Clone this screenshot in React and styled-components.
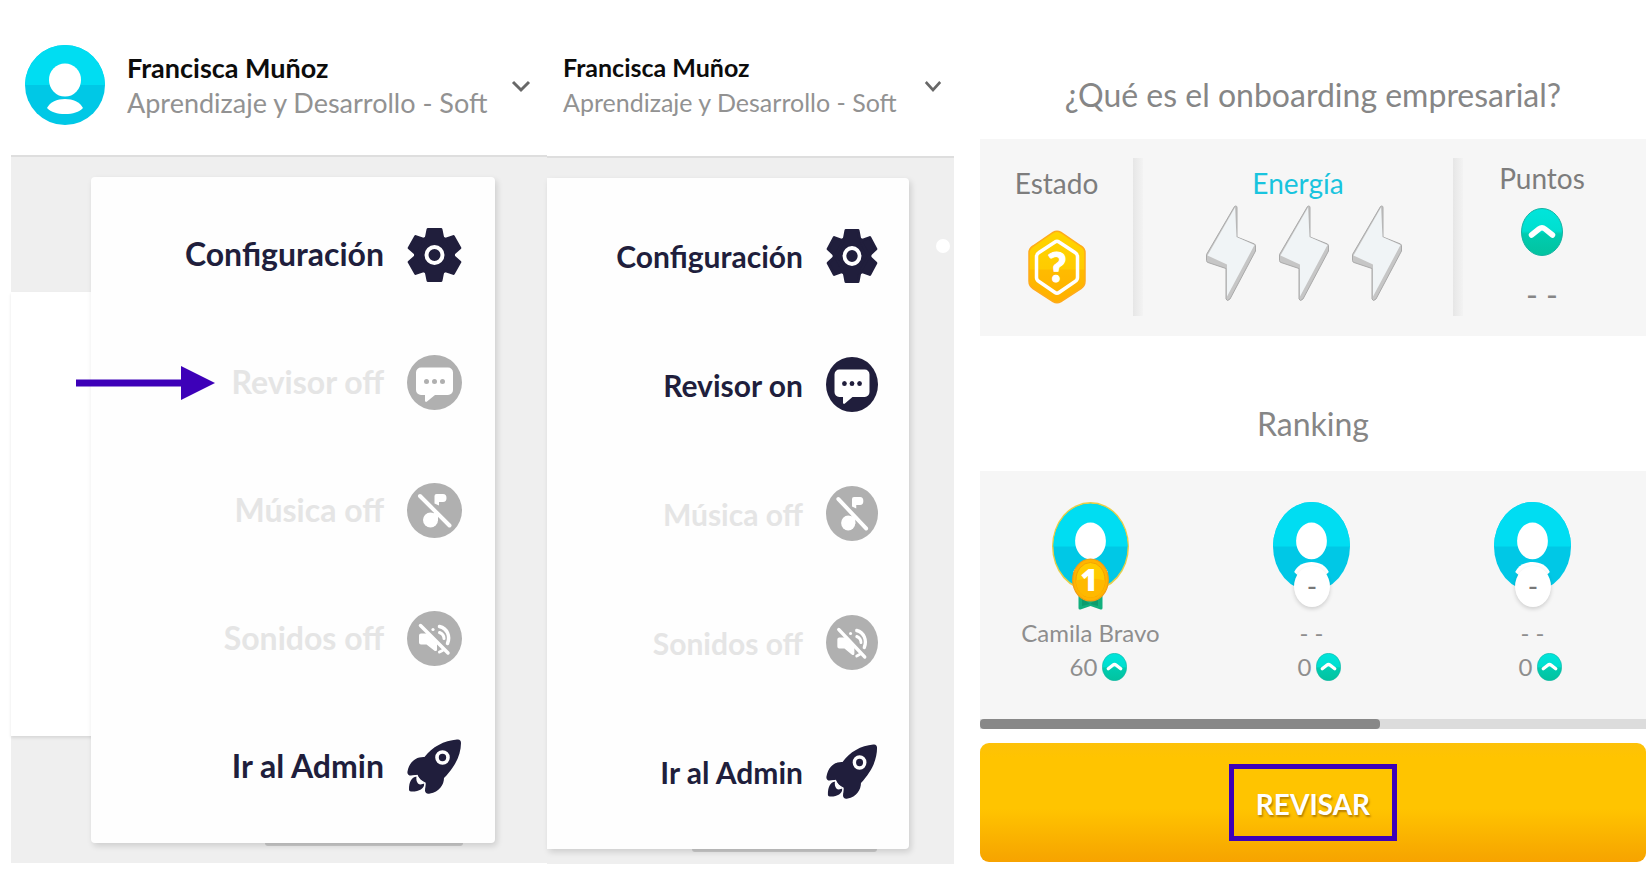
import React, { useId } from "react";
import styled, { createGlobalStyle } from "styled-components";

const GlobalStyle = createGlobalStyle`
   * {
      box-sizing: border-box;
   }
   body {
      margin: 0;
      background-color: white;
      font-family: Lato, "Liberation Sans", sans-serif;
   }
   button {
      font-family: inherit;
      border: none;
      padding: 0;
      background: none;
      cursor: pointer;
   }
   svg {
      display: block;
      flex-shrink: 0;
   }
`;

const Page = styled.main`
   display: grid;
   grid-template-columns: minmax(0, 536fr) minmax(0, 407fr) minmax(0, 692fr);
   align-items: start;
   padding: 0 4px 0 11px;
`;

/* profile panels */
const Panel = styled.section`
   display: flex;
   flex-direction: column;
`;
const Header = styled.header`
   display: flex;
   align-items: center;
   gap: 22px;
   height: ${(props) => (props.$compact ? "158px" : "157px")};
   padding: ${(props) => (props.$compact ? "45px 12px 31px 16px" : "45px 16px 30px 14px")};
   border-bottom: 2px solid #dedede;
`;
const UserInfo = styled.div`
   flex: 1;
   min-width: 0;
   line-height: 35px;
   white-space: nowrap;
`;
const UserName = styled.div`
   font-size: ${(props) => (props.$compact ? "25px" : "27px")};
   font-weight: bold;
   color: #0c0c0c;
`;
const UserArea = styled.div`
   font-size: ${(props) => (props.$compact ? "25px" : "27px")};
   color: #929292;
`;
const Toggle = styled.button`
   display: flex;
   align-items: center;
   padding-top: 3px;
`;
const Body = styled.div`
   position: relative;
   padding: ${(props) => (props.$compact ? "20px 45px 15px 0" : "20px 52px 20px 80px")};
   background-color: #efefef;
`;
const Sheet = styled.div`
   position: absolute;
   top: 135px;
   bottom: 127px;
   left: 0;
   width: 120px;
   background-color: white;
   box-shadow: 0 2px 3px rgba(0, 0, 0, 0.1);
`;
const Shade = styled.div`
   position: absolute;
   right: 32px;
   bottom: -3px;
   width: ${(props) => (props.$compact ? "51%" : "49%")};
   height: 6px;
   border-radius: 3px;
   background-color: #cbcbcb;
`;
const Dot = styled.div`
   position: absolute;
   top: 81px;
   right: 4px;
   width: 14px;
   height: 14px;
   border-radius: 50%;
   background-color: white;
`;
const MenuWrap = styled.div`
   position: relative;
`;
const Menu = styled.nav`
   position: relative;
   display: flex;
   flex-direction: column;
   padding: ${(props) => (props.$compact ? "13px 31px 13px 0" : "13px 33px 13px 0")};
   border-radius: ${(props) => (props.$compact ? "0 4px 4px 0" : "4px")};
   background-color: #fefefe;
   box-shadow: 2px 3px 6px rgba(0, 0, 0, 0.14);
`;
const MenuItem = styled.button`
   display: flex;
   align-items: center;
   justify-content: flex-end;
   gap: 23px;
   height: ${(props) => (props.$compact ? "129px" : "128px")};
   font-size: ${(props) => (props.$compact ? "30px" : "32px")};
   font-weight: bold;
   line-height: 36px;
   white-space: nowrap;
   color: ${(props) => (props.$off ? "#e5e5e5" : "#201e3c")};
`;
const Arrow = styled.svg`
   position: absolute;
   top: 209px;
   left: 65px;
`;

/* summary panel */
const Summary = styled.section`
   display: flex;
   flex-direction: column;
   padding-left: 26px;
   color: #868686;
`;
const Title = styled.h2`
   margin: 0;
   padding: ${(props) => (props.$first ? "75px 0 24px" : "68px 0 27px")};
   font-size: 32px;
   font-weight: normal;
   line-height: 40px;
   text-align: center;
   white-space: nowrap;
`;
const Stats = styled.div`
   display: grid;
   grid-template-columns: 153fr 10px 310fr 10px 158fr;
   height: 197px;
   padding: 19px 25px 20px 0;
   background-color: #f6f6f6;
`;
const Divider = styled.div`
   background: linear-gradient(to right, #e6e6e6, #f3f3f3);
`;
const Stat = styled.div`
   display: flex;
   flex-direction: column;
   align-items: center;
   gap: ${(props) => props.$gap};
   padding-top: ${(props) => (props.$raised ? "2px" : "7px")};
`;
const StatLabel = styled.div`
   font-size: 28px;
   line-height: 36px;
   color: ${(props) => (props.$accent ? "#19c4de" : "#7d7d7d")};
`;
const Bolts = styled.div`
   display: flex;
   gap: 23px;
   padding-left: 12px;
`;
const StatValue = styled.div`
   padding-top: 9px;
   font-size: 32px;
   line-height: 36px;
`;
const Ranking = styled.ol`
   display: grid;
   grid-template-columns: repeat(3, 1fr);
   height: 248px;
   margin: 0;
   padding: 31px 3px 0 0;
   list-style: none;
   background-color: #f6f6f6;
`;
const Player = styled.li`
   display: flex;
   flex-direction: column;
   align-items: center;
   font-size: 24px;
   line-height: 34px;
   color: #8e8e8e;
`;
const Portrait = styled.div`
   position: relative;
   height: 114px;
`;
const Badge = styled.div`
   position: absolute;
   top: 64px;
   left: 21px;
   width: 36px;
   height: 41px;
   border-radius: 50%;
   background-color: white;
   box-shadow: 0 2px 4px rgba(0, 0, 0, 0.16);
   font-size: 28px;
   line-height: 41px;
   text-align: center;
   color: #777777;
`;
const MedalSpot = styled.div`
   position: absolute;
   top: 56px;
   left: 20px;
`;
const Score = styled.div`
   display: flex;
   align-items: center;
   gap: 5px;
   padding-left: 16px;
`;
const Scrollbar = styled.div`
   height: 10px;
   background-color: #dcdcdc;
`;
const Thumb = styled.div`
   width: 60%;
   height: 10px;
   border-radius: 4px;
   background-color: #888888;
`;
const ReviewButton = styled.button`
   display: flex;
   align-items: center;
   justify-content: center;
   height: 119px;
   margin-top: 14px;
   border-radius: 9px;
   background: linear-gradient(#fdc109, #ffc400 12%, #ffc400 55%, #f7a600 96%, #f8a300);
`;
const Highlight = styled.span`
   padding: 17px 22px 14px;
   border: 5px solid #3d00b8;
   font-size: 28px;
   font-weight: bold;
   line-height: 36px;
   color: white;
   text-shadow: 1px 2px 2px rgba(120, 70, 0, 0.55);
`;

const Avatar = ({ width = 80, height = 80, ring }) => {
   const id = useId();
   return (
      <svg width={width} height={height} viewBox="0 0 80 80" preserveAspectRatio="none">
         <defs>
            <clipPath id={id}>
               <circle cx="40" cy="40" r={ring ? 38.5 : 40} />
            </clipPath>
         </defs>
         {ring && <circle cx="40" cy="40" r="40" fill="#e6cf4a" />}
         <g clipPath={`url(#${id})`}>
            <rect width="80" height="80" fill="#00c8e6" />
            <rect width="80" height="40" fill="#00ddf2" />
         </g>
         <ellipse cx="40" cy="35" rx="16" ry="16.5" fill="white" />
         <path d="M22 63C25 57 32 54 40 54s15 3 18 9c-4 4-10 6-18 6s-14-2-18-6z" fill="white" />
      </svg>
   );
};

const Chevron = ({ width }) => (
   <svg width={width} height="13" viewBox="0 0 20 13" preserveAspectRatio="none">
      <path d="M2 2l8 8 8-8" fill="none" stroke="#686868" strokeWidth="3" />
   </svg>
);

const GearIcon = () => (
   <>
      <circle cx="27.5" cy="28" r="20.5" fill="#201e3c" />
      {[0, 60, 120, 180, 240, 300].map((angle) => (
         <path
            key={angle}
            d="M21 2.500h13l2 10H19z"
            fill="#201e3c"
            stroke="#201e3c"
            strokeWidth="3"
            strokeLinejoin="round"
            transform={`rotate(${angle} 27.5 28)`}
         />
      ))}
      <circle cx="27.5" cy="28" r="8" fill="#201e3c" stroke="white" strokeWidth="4" />
   </>
);

const ChatIcon = ({ color }) => (
   <>
      <circle cx="27.5" cy="27.5" r="27.5" fill={color} />
      <path
         d="M14 12.5h27a5 5 0 0 1 5 5V35a5 5 0 0 1-5 5H28l-8 6.500c-1 .8-2 .3-2-1V40h-4a5 5 0 0 1-5-5V17.500a5 5 0 0 1 5-5z"
         fill="white"
      />
      <circle cx="19.5" cy="26.5" r="2.5" fill={color} />
      <circle cx="27.5" cy="26.5" r="2.5" fill={color} />
      <circle cx="35.5" cy="26.5" r="2.5" fill={color} />
   </>
);

const MusicIcon = ({ color }) => (
   <>
      <circle cx="27.5" cy="27.5" r="27.5" fill={color} />
      <circle cx="23.5" cy="37" r="7.5" fill="white" />
      <path d="M27 29l4 4v5h-4z" fill="white" />
      <path d="M27.5 13q0-2 2-2h6.500q3.500 0 3.500 4t-3.500 4h-4v3.500l-4.500-2z" fill="white" />
      <path d="M13 13l29.500 29.500" stroke="white" strokeWidth="4" strokeLinecap="round" />
   </>
);

const SoundIcon = ({ color }) => (
   <>
      <circle cx="27.5" cy="27.5" r="27.5" fill={color} />
      <path d="M14 22.5h6L30 32.5v6c0 1.500-1.500 2-2.500 1.200L19.500 33.500H14q-2 0-2-2v-7q0-2 2-2z" fill="white" />
      <path d="M32.5 15.5c8 2 11 10 8 17" fill="none" stroke="white" strokeWidth="3.5" strokeLinecap="round" />
      <path d="M32.5 21.5c3 1.200 4.500 3.500 4.500 6" fill="none" stroke="white" strokeWidth="3" strokeLinecap="round" />
      <path d="M32.5 41l3-1.5" stroke="white" strokeWidth="3" strokeLinecap="round" />
      <circle cx="26" cy="18.5" r="1.6" fill="white" />
      <path d="M15.5 13L43 40.5" stroke={color} strokeWidth="2" />
      <path d="M13.5 14.5L41 42" stroke="white" strokeWidth="3.5" strokeLinecap="round" />
   </>
);

const RocketIcon = () => (
   <>
      <path
         d="M50 .5c2.500-.5 4 .8 4 3.500 0 8-3 17-8 24-3 4.500-6 8-9 11 0 7-5 14-14 15.500-3 .7-5-.5-5-3l.5-7C14 42 12 40 10.500 36L4 36.500c-2.500 0-4-1.500-3.500-4C2 24 8 17.500 17.500 18 25 8 37 1.500 50 .5z"
         fill="#201e3c"
      />
      <circle cx="35.5" cy="18.5" r="5.5" fill="#201e3c" stroke="white" strokeWidth="3.6" />
      <path d="M9.5 37.500c-5 1-7.500 5-7.500 13 0 1.300.8 2 2 2 8 .3 13-2.500 13.500-8-2 .8-5 1.500-6.500 0-1.500-1.800-2-4-1.500-7z" fill="#201e3c" />
      <path d="M4 37.500l6-1c1.500 3.500 4.500 6 8 7.500l-.5 5" fill="none" stroke="white" strokeWidth="1.2" />
   </>
);

const Icon = ({ type, color, width, height }) => (
   <svg width={width} height={height} viewBox="0 0 55 55" preserveAspectRatio="none">
      {type === "gear" && <GearIcon />}
      {type === "chat" && <ChatIcon color={color} />}
      {type === "music" && <MusicIcon color={color} />}
      {type === "sound" && <SoundIcon color={color} />}
      {type === "rocket" && <RocketIcon />}
   </svg>
);

const StatusHexagon = () => (
   <svg width="58" height="74" viewBox="0 0 58 74">
      <defs>
         <linearGradient id="hexFill" x1="0" y1="0" x2="0" y2="1">
            <stop offset="0" stopColor="#ffd500" />
            <stop offset="0.53" stopColor="#ffcb00" />
            <stop offset="0.54" stopColor="#ffbb00" />
            <stop offset="1" stopColor="#ffb000" />
         </linearGradient>
      </defs>
      <path
         d="M25 2.500q4-2.500 8 0L53 16q4 2.500 4 7v28q0 5-4 7.500L33 71.500q-4 2.500-8 0L5 58.500Q1 56 1 51V23q0-4.500 4-7z"
         fill="url(#hexFill)"
         stroke="#ffab1a"
         strokeWidth="1.5"
      />
      <path
         d="M27 12q2-1.500 4 0L47 22.500q2.500 1.500 2.500 4v21q0 2.500-2.500 4L31 62.500q-2 1.500-4 0L11 51.500q-2.500-1.500-2.500-4v-21q0-2.500 2.500-4z"
         fill="none"
         stroke="white"
         strokeWidth="3.5"
      />
      <text x="29" y="52" textAnchor="middle" fontSize="41" fontWeight="900" fill="white" stroke="white" strokeWidth="1">
         ?
      </text>
   </svg>
);

const Bolt = () => (
   <svg width="50" height="96" viewBox="0 0 50 96">
      <path
         d="M28.500 1.500Q31 0 31 3v29l17.500 7q1.500 1 1 3v4L24 94q-3 3-4 0V63.500L2 57.500q-1.500-.5-1.500-2v-6z"
         fill="#c6c6c6"
         stroke="#a9a9a9"
         strokeWidth="1"
         strokeLinejoin="round"
      />
      <path d="M29 2.500L30.500 32l18 8L21 91.500V59.500L1.500 50.500z" fill="#f0f4f6" />
   </svg>
);

const Coin = ({ width, height }) => (
   <svg width={width} height={height} viewBox="0 0 42 48" preserveAspectRatio="none">
      <defs>
         <linearGradient id="coinFill" x1="0" y1="0" x2="0" y2="1">
            <stop offset="0" stopColor="#00e5dc" />
            <stop offset="0.48" stopColor="#00dfcf" />
            <stop offset="0.54" stopColor="#00ccb0" />
            <stop offset="1" stopColor="#02c39f" />
         </linearGradient>
      </defs>
      <ellipse cx="21" cy="24" rx="20.5" ry="23.5" fill="url(#coinFill)" stroke="#14b3a3" strokeWidth="1" />
      <path
         d="M10.500 27L18 21q3-2.500 6 0l7.500 6"
         fill="none"
         stroke="white"
         strokeWidth="5.5"
         strokeLinecap="round"
      />
   </svg>
);

const Medal = () => (
   <svg width="37" height="53" viewBox="0 0 37 53">
      <path d="M6.500 32h24v18q0 2-2 1.500l-10-3.500-10 3.500q-2 .5-2-1.500z" fill="#12b07e" />
      <path d="M10 40l8 6 8-6v8l-8-2-8 2z" fill="#0c9c6d" />
      <ellipse cx="18.5" cy="22" rx="17.8" ry="21" fill="#ffb400" stroke="#f39c12" strokeWidth="1.2" />
      <ellipse cx="18.5" cy="22" rx="14.5" ry="17.5" fill="#ffcb00" stroke="#f5a300" strokeWidth="1" />
      <path d="M4 22.500q14.500-4 29 0c0 9-6 17-14.500 17S4 31.500 4 22.500z" fill="#ffb900" />
      <text
         x="17"
         y="33"
         textAnchor="middle"
         fontFamily="'Open Sans', sans-serif"
         fontSize="30"
         fontWeight="800"
         fill="white"
      >
         1
      </text>
   </svg>
);

const menuLeft = [
   { label: "Configuración", icon: "gear" },
   { label: "Revisor off", icon: "chat", off: true },
   { label: "Música off", icon: "music", off: true },
   { label: "Sonidos off", icon: "sound", off: true },
   { label: "Ir al Admin", icon: "rocket" },
];

const menuRight = menuLeft.map((item) =>
   item.icon === "chat" ? { label: "Revisor on", icon: "chat" } : item
);

const players = [
   { id: 1, name: "Camila Bravo", points: 60, first: true },
   { id: 2, name: "- -", points: 0 },
   { id: 3, name: "- -", points: 0 },
];

const ProfilePanel = ({ items, compact }) => (
   <Panel>
      <Header $compact={compact}>
         {!compact && <Avatar />}
         <UserInfo>
            <UserName $compact={compact}>Francisca Muñoz</UserName>
            <UserArea $compact={compact}>Aprendizaje y Desarrollo - Soft</UserArea>
         </UserInfo>
         <Toggle aria-label="Menú">
            <Chevron width={compact ? 18 : 20} />
         </Toggle>
      </Header>
      <Body $compact={compact}>
         {compact ? <Dot /> : <Sheet />}
         <MenuWrap>
            <Shade $compact={compact} />
            <Menu $compact={compact}>
               {items.map((item) => (
                  <MenuItem key={item.label} $off={item.off} $compact={compact}>
                     {item.label}
                     <Icon
                        type={item.icon}
                        color={item.off ? "#b0b0b0" : "#201e3c"}
                        width={compact ? 52 : 55}
                        height={55}
                     />
                  </MenuItem>
               ))}
            </Menu>
         </MenuWrap>
         {!compact && (
            <Arrow width="139" height="34" viewBox="0 0 139 34">
               <path d="M0 13.500h105V0l34 17-34 17V20.500H0z" fill="#3d00b8" />
            </Arrow>
         )}
      </Body>
   </Panel>
);

const App = () => {
   return (
      <>
         <GlobalStyle />
         <Page>
            <ProfilePanel items={menuLeft} />
            <ProfilePanel items={menuRight} compact />
            <Summary>
               <Title $first>¿Qué es el onboarding empresarial?</Title>
               <Stats>
                  <Stat $gap="29px">
                     <StatLabel>Estado</StatLabel>
                     <StatusHexagon />
                  </Stat>
                  <Divider />
                  <Stat $gap="4px">
                     <StatLabel $accent>Energía</StatLabel>
                     <Bolts>
                        <Bolt />
                        <Bolt />
                        <Bolt />
                     </Bolts>
                  </Stat>
                  <Divider />
                  <Stat $gap="12px" $raised>
                     <StatLabel>Puntos</StatLabel>
                     <Coin width={42} height={48} />
                     <StatValue>- -</StatValue>
                  </Stat>
               </Stats>
               <Title>Ranking</Title>
               <Ranking>
                  {players.map((player) => (
                     <Player key={player.id}>
                        <Portrait>
                           <Avatar width={77} height={89} ring={player.first} />
                           {player.first ? (
                              <MedalSpot>
                                 <Medal />
                              </MedalSpot>
                           ) : (
                              <Badge>-</Badge>
                           )}
                        </Portrait>
                        {player.name}
                        <Score>
                           {player.points}
                           <Coin width={25} height={28} />
                        </Score>
                     </Player>
                  ))}
               </Ranking>
               <Scrollbar>
                  <Thumb />
               </Scrollbar>
               <ReviewButton>
                  <Highlight>REVISAR</Highlight>
               </ReviewButton>
            </Summary>
         </Page>
      </>
   );
};

export default App;
